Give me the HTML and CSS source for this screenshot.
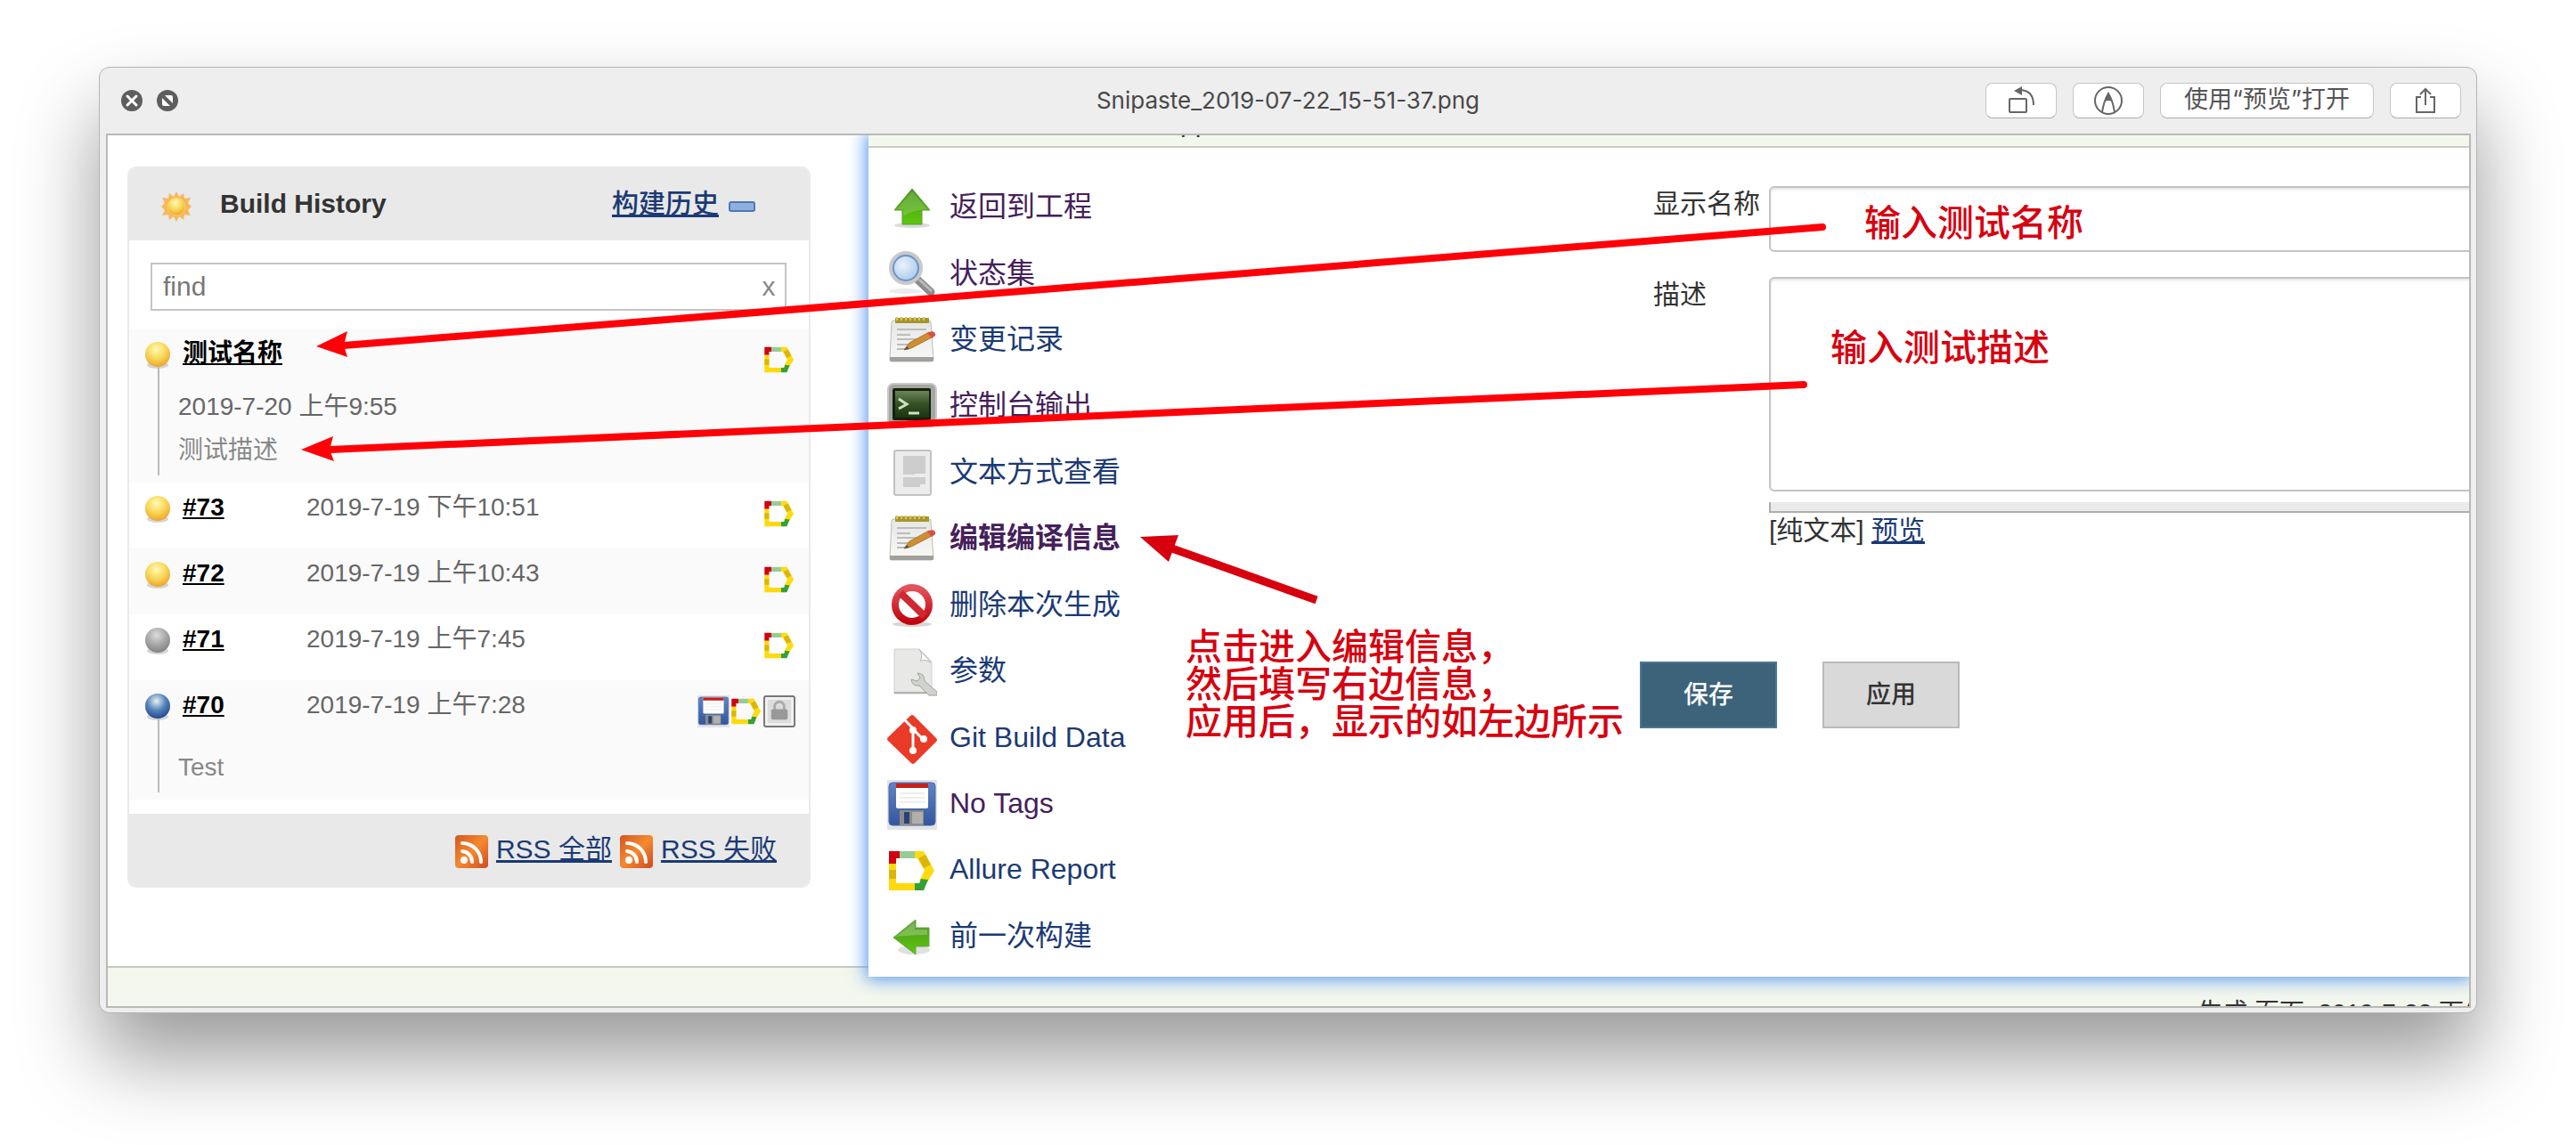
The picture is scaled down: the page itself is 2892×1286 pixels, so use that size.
FILE: index.html
```html
<!DOCTYPE html>
<html lang="zh-CN">
<head>
<meta charset="utf-8">
<title>Snipaste_2019-07-22_15-51-37.png</title>
<link rel="stylesheet" href="styles.css">
</head>
<body>
<svg class="defs" aria-hidden="true">
  <defs>
    <radialGradient id="gy" cx=".45" cy=".3" r=".75"><stop offset="0" stop-color="#fff9b8"/><stop offset=".5" stop-color="#f8d858"/><stop offset="1" stop-color="#ee9a2a"/></radialGradient>
    <radialGradient id="gg" cx=".45" cy=".3" r=".75"><stop offset="0" stop-color="#dcdcdc"/><stop offset=".5" stop-color="#a9a9a9"/><stop offset="1" stop-color="#7d7d7d"/></radialGradient>
    <radialGradient id="gb" cx=".45" cy=".3" r=".75"><stop offset="0" stop-color="#e8f3ee"/><stop offset=".5" stop-color="#5583bd"/><stop offset="1" stop-color="#1b3f86"/></radialGradient>
    <radialGradient id="lens" cx=".4" cy=".4" r=".7"><stop offset="0" stop-color="#eaf3fc"/><stop offset="1" stop-color="#9cc0ea"/></radialGradient>
    <linearGradient id="green" x1="0" y1="0" x2="0" y2="1"><stop offset="0" stop-color="#4d9320"/><stop offset="1" stop-color="#5bc80c"/></linearGradient>
    <linearGradient id="paper" x1="0" y1="0" x2="0" y2="1"><stop offset="0" stop-color="#e6e6e4"/><stop offset="1" stop-color="#f8f8f7"/></linearGradient>
    <linearGradient id="red" x1="0" y1="0" x2="0" y2="1"><stop offset="0" stop-color="#e2545a"/><stop offset="1" stop-color="#c3040e"/></linearGradient>
    <linearGradient id="screen" x1="0" y1="0" x2="0" y2="1"><stop offset="0" stop-color="#6b8656"/><stop offset=".5" stop-color="#345023"/><stop offset="1" stop-color="#1c3310"/></linearGradient>
    <linearGradient id="orange" x1="0" y1="0" x2="1" y2="1"><stop offset="0" stop-color="#d4561f"/><stop offset=".5" stop-color="#f58a30"/><stop offset="1" stop-color="#cc4a20"/></linearGradient>
    <linearGradient id="blue" x1="0" y1="0" x2="0" y2="1"><stop offset="0" stop-color="#5f85c4"/><stop offset="1" stop-color="#34559c"/></linearGradient>
    <symbol id="ball-y" viewBox="0 0 32 32"><ellipse cx="17" cy="28" rx="12" ry="4" fill="#bbb" opacity=".6"/><circle cx="17" cy="16" r="14" fill="url(#gy)"/></symbol>
    <symbol id="ball-g" viewBox="0 0 32 32"><ellipse cx="17" cy="28" rx="12" ry="4" fill="#bbb" opacity=".6"/><circle cx="17" cy="16" r="14" fill="url(#gg)"/></symbol>
    <symbol id="ball-b" viewBox="0 0 32 32"><ellipse cx="17" cy="28" rx="12" ry="4" fill="#bbb" opacity=".6"/><circle cx="17" cy="16" r="14" fill="url(#gb)"/></symbol>
    <symbol id="allure" viewBox="0 0 56 56">
      <path d="M2 6h12v8h-4v6H2z" fill="#d3000f"/><path d="M14 6h17v8H14z" fill="#97cc97"/>
      <path d="M31 6h10l12 22-8 13-9-2 6-11-8-14h-3z" fill="#ffdb10"/><path d="M43 10l6 11-8 4-6-11z" fill="#d9b60d"/>
      <path d="M2 20h8v22h21v8H2z" fill="#ffd90c"/><path d="M2 27h8v10H2z" fill="#d9b60d"/>
      <path d="M31 42h5l2-5 8 1-5 12H31z" fill="#35a035"/>
    </symbol>
    <symbol id="floppy" viewBox="0 0 56 56">
      <path d="M0 0h56v56H0z" fill="#e3e4e8"/><rect x="2" y="3" width="52" height="48" rx="4" fill="url(#blue)" stroke="#4b68a3"/>
      <path d="M10 4h36v26q0 2-2 2H12q-2 0-2-2z" fill="#fff"/><path d="M10 4h36v5H10z" fill="#c7201c"/>
      <path d="M14 15h28M14 20h28M14 25h28" stroke="#ddd"/><path d="M14 34h27v17H14z" fill="#8a8b8a"/><path d="M19 36h6v13h-6z" fill="#2a4176"/><path d="M28 36h12v13H28z" fill="#b0b0ad"/>
    </symbol>
    <symbol id="lock" viewBox="0 0 37 37"><rect x="1" y="1" width="35" height="35" rx="2" fill="#f2f2f2" stroke="#777" stroke-width="2"/><path d="M5 5h27v27H5z" fill="#ddd"/><path d="M13 18v-5a5 5 0 0 1 11 0v5" fill="none" stroke="#aaa" stroke-width="3"/><rect x="9" y="16" width="19" height="12" rx="2" fill="#999"/></symbol>
    <symbol id="rss" viewBox="0 0 37 37"><rect width="37" height="37" rx="4" fill="url(#orange)"/><circle cx="10" cy="28" r="4" fill="#fff"/><path d="M8 18a12 12 0 0 1 11 12M8 9a21 21 0 0 1 21 21" fill="none" stroke="#fff" stroke-width="4" stroke-linecap="round"/></symbol>
    <symbol id="sun" viewBox="0 0 34 34"><path d="M17 0l3 6 5-4 1 6 7-1-3 6 4 4-4 4 3 6-7-1-1 6-5-4-3 6-3-6-5 4-1-6-7 1 3-6-4-4 4-4-3-6 7 1 1-6 5 4z" fill="#f7b75c"/><circle cx="17" cy="17" r="10" fill="url(#gy)" stroke="#fbd05a"/></symbol>
    <symbol id="up" viewBox="0 0 56 56"><ellipse cx="28" cy="47" rx="20" ry="3" fill="#ccc" opacity=".7"/><path d="M28 6L48 30H39V46H17V30H8z" fill="url(#green)" stroke="#5d9a3a"/><path d="M28 9L45 29q-14 0-27 8v-8h-7z" fill="#fff" opacity=".16"/></symbol>
    <symbol id="left" viewBox="0 0 56 56"><ellipse cx="30" cy="42" rx="18" ry="5" fill="#ccc" opacity=".6"/><path d="M7 28L32 8v9H47V38H32v9z" fill="url(#green)" stroke="#6aa54a"/><path d="M10 27L31 10v9h14v6q-18 0-35 2z" fill="#fff" opacity=".25"/></symbol>
    <symbol id="search" viewBox="0 0 56 56"><ellipse cx="20" cy="46" rx="18" ry="3" fill="#ddd" opacity=".6"/><path d="M34 33L49 47" stroke="#8c8c8c" stroke-width="9" stroke-linecap="round"/><path d="M36 33L50 46" stroke="#bbb" stroke-width="3"/><circle cx="21" cy="20" r="17" fill="url(#lens)" stroke="#c9c9c9" stroke-width="4"/><circle cx="21" cy="20" r="14" fill="none" stroke="#6b94c8" stroke-width="2"/></symbol>
    <symbol id="note" viewBox="0 0 56 56"><path d="M7 5h40q2 0 2 2l3 42q0 2-3 2H5q-3 0-2-3L5 7q0-2 2-2z" fill="url(#paper)" stroke="#bdbdba"/><path d="M3 46h49v4q0 1-2 1H5q-2 0-2-2z" fill="#a0a09d"/><path d="M9 2h38v6H9z" fill="#a8952d"/><path d="M11 1v4m5-4v4m5-4v4m5-4v4m5-4v4m5-4v4m5-4v4" stroke="#d5c765" stroke-width="2"/><path d="M11 15h33M11 21h15M11 26h28M11 32h18M11 37h12" stroke="#bcbcba" stroke-width="2"/><path d="M19 38l6-8 22-12 3 6-23 12z" fill="#cf8e30" stroke="#a47a3a"/><path d="M45 19l5-2q5 1 4 5l-4 3z" fill="#d9503f"/><path d="M19 38l3-4 3 3z" fill="#554"/></symbol>
    <symbol id="term" viewBox="0 0 56 56"><rect x="1" y="2" width="54" height="48" rx="6" fill="#a5a7a1" stroke="#c9cac6" stroke-width="2"/><rect x="6" y="7" width="43" height="36" rx="2" fill="#15200f"/><rect x="9" y="10" width="38" height="30" fill="url(#screen)"/><path d="M13 19l9 6-9 5M24 35h12" fill="none" stroke="#cfe0c2" stroke-width="3"/></symbol>
    <symbol id="doc" viewBox="0 0 56 56"><rect x="8" y="2" width="41" height="50" rx="2" fill="#ececec" stroke="#c2c2c2" stroke-width="2"/><path d="M18 8h25v20H31v1H18zM18 32h25v8h-6v3H18z" fill="#cdcdcd"/></symbol>
    <symbol id="stop" viewBox="0 0 56 56"><ellipse cx="28" cy="48" rx="22" ry="3" fill="#bbb" opacity=".6"/><circle cx="28" cy="26" r="19" fill="#fff" stroke="url(#red)" stroke-width="8"/><path d="M15 13L42 39" stroke="#cf2831" stroke-width="8"/></symbol>
    <symbol id="param" viewBox="0 0 56 56"><path d="M8 2h28l14 14v36H8z" fill="#e8e9e7" stroke="#cfd0cd"/><path d="M36 2q5 7 1 13 7-2 12 2z" fill="#fafafa" stroke="#b8bab6"/><path d="M8 50h42v2H8z" fill="#b0b0ae"/><path d="M34 29q8 0 8 9l14 12v4h-9L36 43q-8 1-9-7l7 2 3-4z" fill="#cfd2cd" stroke="#9fa29d"/></symbol>
    <symbol id="git" viewBox="0 0 56 56"><path d="M26 2q2-2 4 0l25 25q2 2 0 4L31 55q-2 2-4 0L1 30q-2-2 0-4z" fill="#e93b28"/><path d="M20 7l9 9v26M29 17l12 12" fill="none" stroke="#fff" stroke-width="3"/><circle cx="29" cy="18" r="4" fill="#fff"/><circle cx="41" cy="28" r="4" fill="#fff"/><circle cx="29" cy="41" r="4" fill="#fff"/></symbol>
  </defs>
</svg>

<main class="window">
  <header class="titlebar">
    <div class="controls">
      <button class="dot" aria-label="关闭"><svg viewBox="0 0 24 24"><circle cx="12" cy="12" r="12" fill="#5e5e5e"/><path d="M7 7l10 10M17 7L7 17" stroke="#fff" stroke-width="3" stroke-linecap="round"/></svg></button>
      <button class="dot" aria-label="全屏"><svg viewBox="0 0 24 24"><circle cx="12" cy="12" r="12" fill="#5e5e5e"/><path d="M6 9v7q0 2 2 2h7zM9 6h7q2 0 2 2v7z" fill="#fff"/></svg></button>
    </div>
    <h1 class="title">Snipaste_2019-07-22_15-51-37.png</h1>
    <div class="tools">
      <button class="tool" aria-label="旋转"><svg width="32" height="32" viewBox="0 0 32 32"><rect x="3" y="14" width="19" height="15" rx="1" fill="none" stroke="#666" stroke-width="2"/><path d="M14 4q16 0 16 17" fill="none" stroke="#666" stroke-width="2"/><path d="M8 5l9-5v10z" fill="#666"/></svg></button>
      <button class="tool" aria-label="标记"><svg width="32" height="32" viewBox="0 0 32 32"><circle cx="16" cy="16" r="15" fill="none" stroke="#666" stroke-width="2"/><path d="M9 29q2-13 7-21 5 8 7 21" fill="none" stroke="#666" stroke-width="2"/><path d="M16 7l4 10q-4-2-8 0z" fill="#666"/></svg></button>
      <button class="tool tool-wide">使用“预览”打开</button>
      <button class="tool" aria-label="共享"><svg width="32" height="32" viewBox="0 0 32 32"><path d="M11 12H6v17h20V12h-5M16 21V3M10 9l6-6 6 6" fill="none" stroke="#666" stroke-width="2"/></svg></button>
    </div>
  </header>

  <div class="frame">
    <div class="page">
      <aside class="side">
        <section class="history">
          <header class="history-head">
            <svg class="sun"><use href="#sun"/></svg>
            <h2>Build History</h2>
            <a href="#trend">构建历史</a>
            <svg class="minus" viewBox="0 0 30 12"><rect x="1" y="1" width="28" height="10" rx="2" fill="#8fb0de" stroke="#4f78b4" stroke-width="2"/></svg>
          </header>
          <div class="find">
            <input type="text" value="find" aria-label="find">
            <button aria-label="清除">x</button>
          </div>
          <ul class="builds">
            <li class="build has-detail">
              <svg class="ball"><use href="#ball-y"/></svg>
              <a href="#74">测试名称</a>
              <span class="marks"><svg><use href="#allure"/></svg></span>
              <div class="detail"><p class="date">2019-7-20 上午9:55</p><p>测试描述</p></div>
            </li>
            <li class="build"><svg class="ball"><use href="#ball-y"/></svg><a href="#73">#73</a><span class="date">2019-7-19 下午10:51</span><span class="marks"><svg><use href="#allure"/></svg></span></li>
            <li class="build"><svg class="ball"><use href="#ball-y"/></svg><a href="#72">#72</a><span class="date">2019-7-19 上午10:43</span><span class="marks"><svg><use href="#allure"/></svg></span></li>
            <li class="build"><svg class="ball"><use href="#ball-g"/></svg><a href="#71">#71</a><span class="date">2019-7-19 上午7:45</span><span class="marks"><svg><use href="#allure"/></svg></span></li>
            <li class="build has-detail">
              <svg class="ball"><use href="#ball-b"/></svg><a href="#70">#70</a><span class="date">2019-7-19 上午7:28</span>
              <span class="marks"><svg><use href="#floppy"/></svg><svg><use href="#allure"/></svg><svg><use href="#lock"/></svg></span>
              <div class="detail detail-low"><p>Test</p></div>
            </li>
          </ul>
          <footer class="history-foot">
            <svg><use href="#rss"/></svg><a href="#rss-all">RSS 全部</a>
            <svg><use href="#rss"/></svg><a href="#rss-failed">RSS 失败</a>
          </footer>
        </section>
      </aside>

      <section class="sheet">
        <div class="crumbs"><span>pp</span></div>
        <div class="sheet-body">
          <nav class="menu">
            <a class="seen" href="#up"><svg><use href="#up"/></svg>返回到工程</a>
            <a class="seen" href="#status"><svg><use href="#search"/></svg>状态集</a>
            <a href="#changes"><svg><use href="#note"/></svg>变更记录</a>
            <a class="seen" href="#console"><svg><use href="#term"/></svg>控制台输出</a>
            <a href="#text"><svg><use href="#doc"/></svg>文本方式查看</a>
            <a class="seen current" href="#edit"><svg><use href="#note"/></svg>编辑编译信息</a>
            <a href="#delete"><svg><use href="#stop"/></svg>删除本次生成</a>
            <a href="#params"><svg><use href="#param"/></svg>参数</a>
            <a href="#git"><svg><use href="#git"/></svg>Git Build Data</a>
            <a class="seen" href="#tags"><svg><use href="#floppy"/></svg>No Tags</a>
            <a href="#allure"><svg><use href="#allure"/></svg>Allure Report</a>
            <a href="#prev"><svg><use href="#left"/></svg>前一次构建</a>
          </nav>
          <form class="form">
            <div class="fields">
              <label for="name">显示名称</label>
              <input id="name" type="text">
              <label for="desc">描述</label>
              <div class="area">
                <textarea id="desc"></textarea>
                <div class="grip"></div>
                <p>[纯文本] <a href="#preview">预览</a></p>
              </div>
            </div>
            <div class="actions">
              <button type="button" class="save">保存</button>
              <button type="button" class="apply">应用</button>
            </div>
          </form>
        </div>
      </section>
    </div>
    <footer class="page-foot"><span>生成 页面: 2019-7-22 下午</span></footer>

    <div class="notes">
      <svg class="arrows">
        <g stroke="#ff0008" stroke-width="8" stroke-linecap="round" fill="none"><path d="M265 236L1925 103"/><path d="M249 353L1904 280"/></g>
        <path d="M234 237L269 220L265 236L269 249z" fill="#ff0008"/>
        <path d="M217 353L253 338L249 353L254 366z" fill="#ff0008"/>
        <path d="M1192 463L1357 522" stroke="#d7000f" stroke-width="9"/>
        <path d="M1159 451L1202 449L1191 479z" fill="#d7000f"/>
      </svg>
      <p class="note note-name">输入测试名称</p>
      <p class="note note-desc">输入测试描述</p>
      <p class="note note-edit">点击进入编辑信息，<br>然后填写右边信息，<br>应用后，显示的如左边所示</p>
    </div>
  </div>
</main>
</body>
</html>
```
FILE: styles.css
```css
* { box-sizing: border-box; margin: 0; padding: 0; }

body {
  display: flex;
  min-height: 100vh;
  padding: 75px 111px 148px;
  background: #fff;
  color: #333;
  font: 30px/40px "Liberation Sans", "Noto Sans CJK SC", sans-serif;
}

a { color: #1b3a75; }
button, input, textarea { font: inherit; color: inherit; }
.defs { position: absolute; width: 0; height: 0; }

/* Preview window */
.window {
  display: flex;
  flex: 1;
  flex-direction: column;
  min-width: 0;
  border: 1px solid #b4b4b4;
  border-radius: 12px;
  background: #eee;
  box-shadow: 0 50px 90px rgba(0, 0, 0, .4);
}

.titlebar {
  display: grid;
  grid-template-columns: 1fr auto 1fr;
  align-items: center;
  height: 74px;
  padding: 0 17px;
}

.controls { display: flex; gap: 16px; margin-left: 7px; }
.dot { width: 24px; height: 24px; border: 0; background: none; }
.dot svg { display: block; width: 24px; height: 24px; }
.title { color: #484848; font: 400 26px/40px Inter, sans-serif; }
.tools { display: flex; justify-content: flex-end; gap: 18px; }

.tool {
  display: flex;
  align-items: center;
  justify-content: center;
  width: 80px;
  height: 40px;
  border: 1px solid #c6c6c6;
  border-bottom-color: #aaa;
  border-radius: 8px;
  background: #fff;
  color: #555;
}
.tool-wide { width: 240px; padding-bottom: 2px; font-family: Inter, "Noto Sans CJK SC", sans-serif; font-size: 27px; }

.frame {
  position: relative;
  display: flex;
  flex: 1;
  flex-direction: column;
  margin: 0 6px 5px 7px;
  border: 2px solid #b8bab5;
  background: #fff;
  overflow: hidden;
}

.page { display: grid; flex: 1; grid-template-columns: 854px 1fr; }

/* Build history */
.side { padding: 35px 65px 35px 22px; }
.history { border: 2px solid #eaeaea; border-radius: 10px; overflow: hidden; }

.history-head {
  display: flex;
  align-items: center;
  height: 81px;
  padding: 0 60px 2px 36px;
  background: #e9e9e9;
}
.sun { width: 34px; height: 34px; margin: 6px 32px 0 0; }
.history-head h2 { flex: 1; font-size: 30px; }
.history-head a { font-weight: 500; }
.minus { width: 30px; height: 12px; margin: 6px 0 0 11px; }

.find {
  display: flex;
  align-items: center;
  height: 54px;
  margin: 25px 25px 20px 24px;
  border: 2px solid #c4c4c4;
  color: #777;
}
.find input { flex: 1; min-width: 0; padding-left: 12px; border: 0; outline: 0; background: none; }
.find button { width: 36px; border: 0; background: none; color: #888; }

.builds { list-style: none; font-size: 28px; }
.build {
  position: relative;
  display: grid;
  grid-template-columns: 32px 126px 1fr auto;
  column-gap: 13px;
  min-height: 74px;
  padding: 8px 15px 0 15px;
}
.build:nth-child(odd) { background: #fafafa; }
.build a { color: #000; font-weight: 700; white-space: nowrap; }
.ball { width: 32px; height: 32px; margin-top: 5px; }
.date { color: #666; }
.marks { display: flex; grid-column: 4; gap: 1px; margin-top: 9px; }
.marks svg { width: 36px; height: 36px; }
.has-detail { padding-bottom: 12px; }
.has-detail::before {
  content: "";
  position: absolute;
  top: 43px;
  bottom: 8px;
  left: 32px;
  width: 2px;
  background: #bbb;
}
.detail { grid-column: 1 / -1; margin: 10px 0 0 40px; color: #888; line-height: 49px; }
.detail-low { margin-top: 20px; }

.history-foot {
  display: flex;
  align-items: center;
  justify-content: flex-end;
  gap: 9px;
  height: 81px;
  margin-top: 16px;
  padding: 0 36px 2px 0;
  background: #e9e9e9;
}
.history-foot svg { width: 37px; height: 37px; margin-top: 6px; }

/* Sheet with the build's menu and form */
.sheet {
  position: relative;
  z-index: 1;
  display: flex;
  flex-direction: column;
  min-width: 0;
  margin-bottom: -12px;
  background: #fff;
  box-shadow: 0 0 18px 3px #5a9af0;
}
.crumbs {
  height: 14px;
  padding-left: 350px;
  border-bottom: 2px solid #cbcfc6;
  background: #f3f8ee;
  overflow: hidden;
}
.crumbs span { display: block; margin-top: -29px; line-height: 30px; }
.sheet-body { display: grid; flex: 1; grid-template-columns: 866px 1fr; }

.menu { display: flex; flex-direction: column; padding: 29px 21px 9px; font-size: 32px; }
.menu a { display: flex; flex: 1; align-items: center; gap: 14px; text-decoration: none; }
.menu .seen { color: #45205a; }
.menu .current { font-weight: 700; }
.menu svg { width: 56px; height: 56px; margin-top: 4px; }

.form { min-width: 0; padding-top: 43px; }
.fields {
  display: grid;
  grid-template-columns: 130px 1fr;
  row-gap: 28px;
  margin: 0 -12px 0 15px;
}
.fields input, .fields textarea {
  display: block;
  width: 100%;
  border: 2px solid #c4c4c4;
  border-radius: 6px;
  background: #fff;
  box-shadow: inset 0 2px 3px #e4e4e4;
  resize: none;
}
.fields input { height: 74px; }
.fields textarea { height: 241px; }
.grip { height: 12px; margin-top: 12px; border: solid #adafa9; border-width: 0 0 2px 2px; background: #eaeaea; }

.actions { display: flex; gap: 51px; margin-top: 127px; }
.actions button { width: 154px; height: 75px; border: 2px solid #b9b9b9; background: #d9d9d9; font-size: 28px; font-weight: 500; }
.actions .save { border-color: #4b7893; background: #3c637a; color: #fff; }

.page-foot {
  display: flex;
  justify-content: flex-end;
  height: 45px;
  border-top: 2px solid #c6cac1;
  background: #f3f7ee;
}
.page-foot span {
  z-index: 2;
  margin: 31px -22px 0 0;
  font-size: 28px;
  white-space: nowrap;
}

/* Red notes drawn over the page */
.notes { position: absolute; z-index: 3; inset: 0; pointer-events: none; }
.arrows { width: 100%; height: 100%; }
.note {
  position: absolute;
  color: #d7000f;
  font: 500 41px/42px "Noto Sans CJK SC", sans-serif;
  white-space: nowrap;
}
.note-name { top: 74px; left: 1972px; }
.note-desc { top: 214px; left: 1934px; }
.note-edit { top: 550px; left: 1210px; }
```
